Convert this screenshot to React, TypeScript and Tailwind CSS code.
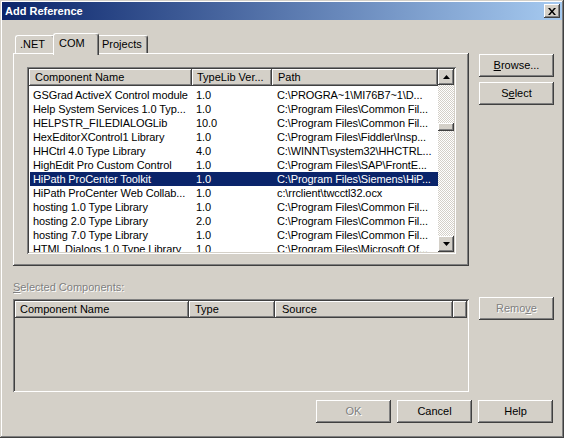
import React from "react";

const raised =
  "shadow-[inset_-1px_-1px_#404040,inset_1px_1px_#ffffff,inset_-2px_-2px_#808080,inset_2px_2px_#d4d0c8]";
const sunken =
  "shadow-[inset_1px_1px_#808080,inset_-1px_-1px_#ffffff,inset_2px_2px_#404040,inset_-2px_-2px_#d4d0c8]";
const headerCell =
  "shadow-[inset_-1px_-1px_#404040,inset_1px_1px_#ffffff,inset_-2px_-2px_#808080]";
const disabledText = "text-[#808080] [text-shadow:1px_1px_0_#ffffff]";

const rows: [string, string, string][] = [
  ["GSGrad ActiveX Control module", "1.0", "C:\\PROGRA~1\\MI76B7~1\\D..."],
  ["Help System Services 1.0 Typ...", "1.0", "C:\\Program Files\\Common Fil..."],
  ["HELPSTR_FILEDIALOGLib", "10.0", "C:\\Program Files\\Common Fil..."],
  ["HexEditorXControl1 Library", "1.0", "C:\\Program Files\\Fiddler\\Insp..."],
  ["HHCtrl 4.0 Type Library", "4.0", "C:\\WINNT\\system32\\HHCTRL..."],
  ["HighEdit Pro Custom Control", "1.0", "C:\\Program Files\\SAP\\FrontE..."],
  ["HiPath ProCenter Toolkit", "1.0", "C:\\Program Files\\Siemens\\HiP..."],
  ["HiPath ProCenter Web Collab...", "1.0", "c:\\rrclient\\twcctl32.ocx"],
  ["hosting 1.0 Type Library", "1.0", "C:\\Program Files\\Common Fil..."],
  ["hosting 2.0 Type Library", "2.0", "C:\\Program Files\\Common Fil..."],
  ["hosting 7.0 Type Library", "1.0", "C:\\Program Files\\Common Fil..."],
  ["HTML Dialogs 1.0 Type Library", "1.0", "C:\\Program Files\\Microsoft Of..."],
];

function Button({
  children,
  disabled,
}: {
  children: React.ReactNode;
  disabled?: boolean;
}) {
  return (
    <div
      className={`w-[75px] h-[23px] flex items-center justify-center bg-[#d4d0c8] ${raised} ${
        disabled ? disabledText : "text-black"
      }`}
    >
      {children}
    </div>
  );
}

function Arrow({ up }: { up?: boolean }) {
  return (
    <div className={`w-[16px] h-[16px] flex items-center justify-center bg-[#d4d0c8] ${raised}`}>
      <svg width="7" height="4" viewBox="0 0 7 4">
        {up ? (
          <polygon points="3.5,0 7,4 0,4" fill="#000" />
        ) : (
          <polygon points="0,0 7,0 3.5,4" fill="#000" />
        )}
      </svg>
    </div>
  );
}

export default function App() {
  return (
    <div
      className={`w-[564px] h-[438px] bg-[#d4d0c8] p-[2px] flex flex-col font-['Liberation_Sans',Arial,sans-serif] text-[11px] leading-[13px] text-black select-none shadow-[inset_-1px_-1px_#404040,inset_1px_1px_#d4d0c8,inset_-2px_-2px_#808080,inset_2px_2px_#ffffff]`}
    >
      {/* Title bar */}
      <div className="h-[18px] flex items-center justify-between pl-[3px] pr-[2px] bg-[linear-gradient(to_right,#0a246a,#a6caf0)]">
        <span className="text-white font-bold text-[11px]">Add Reference</span>
        <div className={`w-[16px] h-[14px] flex items-center justify-center bg-[#d4d0c8] ${raised}`}>
          <svg width="8" height="7" viewBox="0 0 8 7">
            <path d="M0 0h2l2 2.5L6 0h2L5 3.5 8 7H6L4 4.5 2 7H0l3-3.5z" fill="#000" />
          </svg>
        </div>
      </div>

      {/* Body */}
      <div className="flex flex-col pl-[11px] pt-[13px]">
        <div className="flex gap-[10px]">
          {/* Left column */}
          <div className="w-[456px] flex flex-col">
            {/* Tabs */}
            <div className="h-[21px] flex items-end pl-[2px]">
              <div className="w-[40px] h-[18px] mb-[1px] flex items-center pl-[4px] border-t border-l border-r border-t-white border-l-white border-r-[#404040] rounded-t-[3px] shadow-[inset_-1px_0_#808080]">
                .NET
              </div>
              <div className="relative z-10 -ml-[2px] w-[46px] h-[22px] -mb-[1px] flex items-start pt-[3px] pl-[5px] bg-[#d4d0c8] border-t border-l border-r border-t-white border-l-white border-r-[#404040] rounded-t-[3px] shadow-[inset_-1px_0_#808080]">
                COM
              </div>
              <div className="w-[49px] h-[18px] mb-[1px] flex items-center pl-[3px] border-t border-r border-t-white border-r-[#404040] rounded-tr-[3px] shadow-[inset_-1px_0_#808080]">
                Projects
              </div>
            </div>
            {/* Tab panel */}
            <div
              className={`-mt-[1px] h-[213px] pl-[14px] pt-[14px] pr-[13px] pb-[12px] shadow-[inset_-1px_-1px_#404040,inset_1px_1px_#ffffff,inset_-2px_-2px_#808080]`}
            >
              <div className={`w-[429px] h-[187px] p-[2px] bg-white ${sunken}`}>
                <div className="flex h-full">
                  <div className="flex-1 flex flex-col overflow-hidden">
                    <div className="h-[17px] flex bg-[#d4d0c8] shrink-0">
                      <div className={`w-[163px] pl-[6px] flex items-center ${headerCell}`}>Component Name</div>
                      <div className={`w-[80px] pl-[5px] flex items-center ${headerCell}`}>TypeLib Ver...</div>
                      <div className={`w-[166px] pl-[6px] flex items-center ${headerCell}`}>Path</div>
                    </div>
                    <div className="pt-[2px]">
                      {rows.map((r, i) => {
                        const sel = i === 6;
                        return (
                          <div
                            key={i}
                            className={`h-[14px] flex items-center whitespace-nowrap tracking-[-0.1px] ${
                              sel ? "bg-[#0a246a] text-white ml-[1px]" : ""
                            }`}
                          >
                            <div className={`${sel ? "w-[162px] pl-[3px]" : "w-[163px] pl-[4px]"} overflow-hidden`}>
                              {r[0]}
                            </div>
                            <div className="w-[80px] pl-[4px]">{r[1]}</div>
                            <div className="w-[166px] pl-[5px] overflow-hidden">{r[2]}</div>
                          </div>
                        );
                      })}
                    </div>
                  </div>
                  {/* Scrollbar */}
                  <div className="w-[16px] flex flex-col">
                    <Arrow up />
                    <div className="flex-1 flex flex-col [background-image:repeating-conic-gradient(#d4d0c8_0_25%,#ffffff_0_50%)] [background-size:2px_2px]">
                      <div className="h-[38px]" />
                      <div className={`h-[8px] bg-[#d4d0c8] ${raised}`} />
                    </div>
                    <Arrow />
                  </div>
                </div>
              </div>
            </div>

            {/* Selected components */}
            <div className={`mt-[15px] h-[13px] ${disabledText}`}>
              <span className="underline">S</span>elected Components:
            </div>
            <div className={`mt-[5px] h-[93px] p-[2px] bg-[#d4d0c8] ${sunken}`}>
              <div className="h-[17px] flex">
                <div className={`w-[174px] pl-[5px] flex items-center ${headerCell}`}>Component Name</div>
                <div className={`w-[86px] pl-[6px] flex items-center ${headerCell}`}>Type</div>
                <div className={`w-[178px] pl-[7px] flex items-center ${headerCell}`}>Source</div>
                <div className={`w-[14px] ${headerCell}`} />
              </div>
            </div>
          </div>

          {/* Right column */}
          <div className="flex flex-col pt-[21px]">
            <Button>
              <span>
                <span className="underline">B</span>rowse...
              </span>
            </Button>
            <div className="h-[5px]" />
            <Button>
              <span>
                S<span className="underline">e</span>lect
              </span>
            </Button>
            <div className="h-[192px]" />
            <Button disabled>
              <span>
                Remo<span className="underline">v</span>e
              </span>
            </Button>
          </div>
        </div>

        {/* Bottom buttons */}
        <div className="flex justify-end gap-[6px] pr-[9px] mt-[8px]">
          <Button disabled>OK</Button>
          <Button>Cancel</Button>
          <Button>Help</Button>
        </div>
      </div>
    </div>
  );
}
